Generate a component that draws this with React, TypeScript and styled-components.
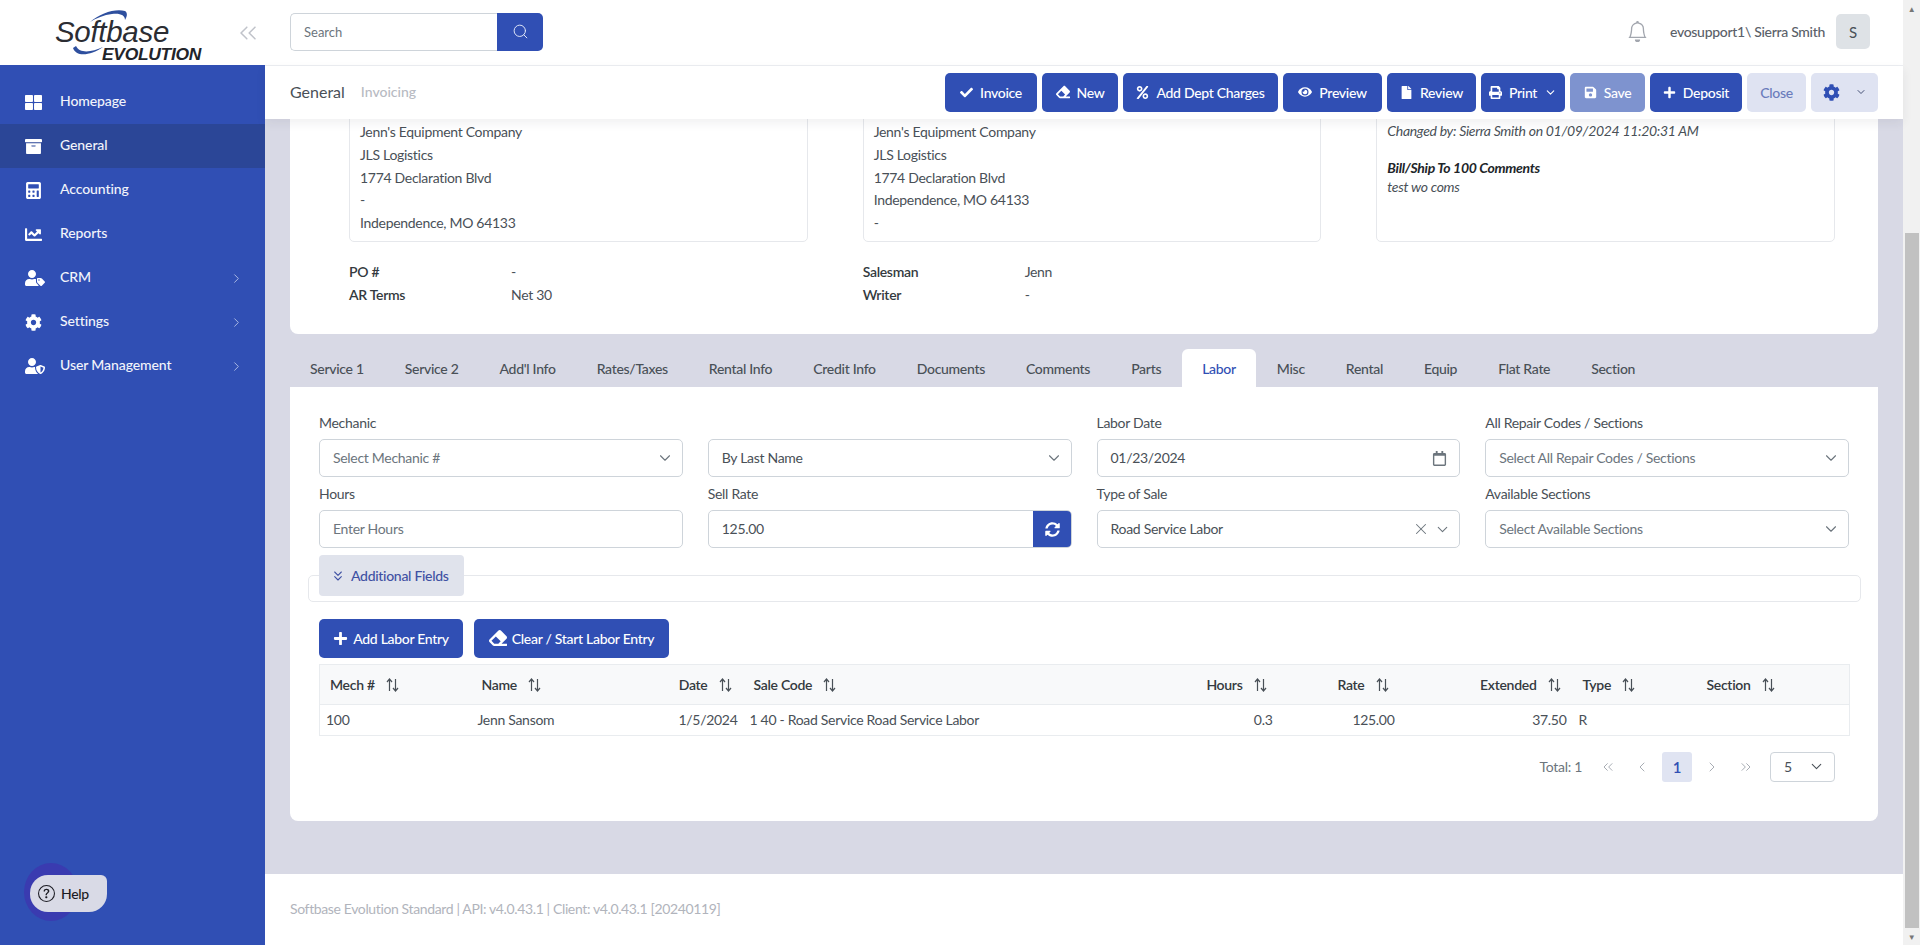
import React from "react";
import styled, { createGlobalStyle } from "styled-components";
import { ChevronDown, ChevronRight, ChevronLeft, ChevronsLeft, ChevronsRight, ChevronsDown, X, Search as SearchGlyph } from "lucide-react";
import { FaThLarge, FaArchive, FaCalculator, FaChartLine, FaUserTag, FaCog, FaUserShield, FaCheck, FaEraser, FaPercent, FaEye, FaFile, FaPrint, FaSave, FaPlus, FaSyncAlt, FaRegCalendar } from "react-icons/fa";
import { BsBell, BsQuestionCircle } from "react-icons/bs";

const PRIMARY = "#304fb4";
const FONT = `Lato, "Open Sans", "Liberation Sans", sans-serif`;

const Global = createGlobalStyle`
  html, body { margin: 0; padding: 0; height: 100%; overflow: hidden; }
  body { font-family: ${FONT}; font-size: 14px; color: #495057; letter-spacing: -0.3px; }
  * { box-sizing: border-box; }
`;

const Root = styled.div`display: flex; width: 1920px; height: 945px; overflow: hidden; background: #fff;`;

const Sidebar = styled.aside`position: relative; width: 265px; flex: none; display: flex; flex-direction: column; background: ${PRIMARY};`;
const LogoBar = styled.div`height: 65px; flex: none; background: #fff; display: flex; align-items: center; justify-content: space-between; padding: 0 3px 0 50px; color: #c0c3ca;`;
const Nav = styled.nav`padding-top: 15px; display: flex; flex-direction: column;`;
const NavItem = styled.div<{ $active?: boolean }>`
  height: 44px; display: flex; align-items: center; padding: 0 21px 0 25px; color: #f2f4fb; font-size: 14px; font-weight: 500; letter-spacing: -0.1px;
  background: ${(p) => (p.$active ? "#2b4697" : "transparent")};
`;
const NavIcon = styled.span`width: 35px; flex: none; display: flex; align-items: center; font-size: 17px; color: #fff;`;
const NavLabel = styled.span`flex: 1; padding-bottom: 3px;`;
const NavArrow = styled.span`display: flex; color: #a9b8e4;`;

const HelpWrap = styled.div`position: absolute; left: 24px; top: 863px; width: 84px; height: 58px;`;
const HelpHalo = styled.div`position: absolute; left: 0; top: 0; width: 54px; height: 58px; border-radius: 50%; background: #3a3bb0;`;
const HelpPill = styled.div`
  position: absolute; left: 6px; top: 12px; width: 77px; height: 37px; border-radius: 18px 6px 18px 18px; background: #d9dae6;
  display: flex; align-items: center; gap: 6px; padding-left: 8px; color: #1c1c24; font-size: 14px; font-weight: 500;
`;

const Main = styled.div`flex: 1; min-width: 0; display: flex; flex-direction: column;`;
const TopBar = styled.header`height: 66px; flex: none; display: flex; align-items: center; padding: 0 33px 2px 25px; border-bottom: 1px solid #eceef2; background: #fff;`;
const SearchBox = styled.div`display: flex; width: 253px; height: 38px;`;
const SearchInput = styled.div`flex: 1; border: 1px solid #ced4da; border-right: 0; border-radius: 5px 0 0 5px; padding: 0 13px; display: flex; align-items: center; color: #6c757d; font-size: 13px; letter-spacing: 0;`;
const SearchButton = styled.div`width: 46px; background: ${PRIMARY}; color: #dfe5f7; border-radius: 0 5px 5px 0; display: flex; align-items: center; justify-content: center;`;
const TopRight = styled.div`margin-left: auto; display: flex; align-items: center;`;
const Bell = styled.span`display: flex; color: #a2a6ae; font-size: 21px; margin-right: 22px;`;
const UserName = styled.span`font-size: 14px; font-weight: 500; color: #5b6169; margin-right: 11px;`;
const Avatar = styled.div`width: 34px; height: 35px; border-radius: 5px; background: #dee2e6; display: flex; align-items: center; justify-content: center; color: #495057; font-size: 15px;`;

const TitleBar = styled.div`
  position: relative; z-index: 2; height: 53px; flex: none; display: flex; align-items: center; padding: 0 25px; background: #fff;
  box-shadow: 0 4px 10px rgba(40, 40, 60, 0.07);
`;
const Crumb = styled.span`font-size: 16px; letter-spacing: 0; color: #495057; margin-right: 16px; padding-bottom: 2px;`;
const CrumbSub = styled.span`font-size: 14px; font-weight: 500; letter-spacing: 0; color: #b7bac2; padding-bottom: 2px;`;
const Toolbar = styled.div`margin-left: auto; display: flex; gap: 5px;`;
const ToolButton = styled.div<{ $w: number; $variant?: "muted" | "soft" }>`
  width: ${(p) => p.$w}px; height: 39px; padding-bottom: 1px; border-radius: 5px; display: flex; align-items: center; justify-content: center; gap: 7px; font-size: 14px; font-weight: 500;
  background: ${(p) => (p.$variant === "muted" ? "#7e93cf" : p.$variant === "soft" ? "#dfe3f2" : PRIMARY)};
  color: ${(p) => (p.$variant === "soft" ? "#6a7cbc" : "#fff")};
`;

const Content = styled.div`flex: 1; min-height: 0; overflow: hidden; background: #d8d9e5;`;
const Card = styled.section`margin: -20px 25px 0; padding: 0 43px 28px 59px; background: #fff; border-radius: 0 0 8px 8px;`;
const BoxRow = styled.div`display: grid; grid-template-columns: repeat(3, 1fr); gap: 55px;`;
const AddressBox = styled.div`height: 143px; overflow: hidden; padding: 21px 10px 0; border: 1px solid #e6e8ec; border-radius: 5px; font-size: 14px; line-height: 22.75px; color: #495057; white-space: nowrap;`;
const CommentLine = styled.div<{ $bold?: boolean; $gap?: number }>`
  font-style: italic; line-height: 19px; margin-top: ${(p) => p.$gap ?? 0}px; font-weight: ${(p) => (p.$bold ? 700 : 400)}; color: ${(p) => (p.$bold ? "#212529" : "#495057")};
`;
const InfoRow = styled.div`display: grid; grid-template-columns: repeat(3, 1fr); gap: 55px; margin-top: 18px;`;
const InfoPair = styled.div`display: grid; grid-template-columns: 162px 1fr; line-height: 23px;`;
const InfoLabel = styled.span`font-weight: 600; color: #343a40;`;
const InfoValue = styled.span`color: #495057;`;

const TabRow = styled.div`display: flex; gap: 1px; height: 38px; margin: 15px 25px 0; `;
const Tab = styled.div<{ $active?: boolean }>`
  padding: 0 20px; display: flex; align-items: center; font-size: 14px; font-weight: 500; border-radius: 6px 6px 0 0;
  color: ${(p) => (p.$active ? PRIMARY : "#495057")}; background: ${(p) => (p.$active ? "#fff" : "transparent")};
`;
const Panel = styled.section`margin: 0 25px; padding: 26px 29px 39px; background: #fff; border-radius: 0 0 8px 8px;`;
const FormGrid = styled.div`display: grid; grid-template-columns: repeat(4, 1fr); column-gap: 25px; row-gap: 7px;`;
const Field = styled.div`display: flex; flex-direction: column; gap: 6px;`;
const Label = styled.label`font-size: 14px; line-height: 20px; color: #495057;`;
const InputShell = styled.div`height: 38px; display: flex; align-items: stretch; border: 1px solid #ced4da; border-radius: 5px; background: #fff; overflow: hidden;`;
const InputText = styled.span<{ $placeholder?: boolean }>`flex: 1; display: flex; align-items: center; padding: 0 0 2px 13px; font-size: 14px; color: ${(p) => (p.$placeholder ? "#6c757d" : "#495057")};`;
const InputIcon = styled.span<{ $w?: number }>`width: ${(p) => p.$w ?? 33}px; flex: none; display: flex; align-items: center; justify-content: flex-start; color: #6c757d;`;
const RefreshButton = styled.span`width: 39px; margin: -1px; flex: none; display: flex; align-items: center; justify-content: center; background: ${PRIMARY}; color: #fff; font-size: 15px;`;

const Collapse = styled.div`position: relative; height: 27px; margin: 27px -12px 0 -11px; border: 1px solid #e6e8ec; border-radius: 5px;`;
const CollapseButton = styled.div`
  position: absolute; left: 10px; top: -21px; width: 145px; height: 41px; background: #e0e3ec; border-radius: 4px;
  display: flex; align-items: center; gap: 5px; padding-left: 11px; color: #3f51a3; font-size: 14px; font-weight: 500;
`;
const Actions = styled.div`display: flex; gap: 11px; margin-top: 17px;`;
const ActionButton = styled.div<{ $w: number }>`
  width: ${(p) => p.$w}px; height: 39px; padding-bottom: 1px; background: ${PRIMARY}; color: #fff; border-radius: 5px; display: flex; align-items: center; justify-content: center; gap: 5px; font-size: 14px; font-weight: 500;
`;

const Table = styled.table`width: calc(100% - 1px); table-layout: fixed; border-collapse: collapse; margin: 6px 0 0 0; border: 1px solid #e9ecef;`;
const Th = styled.th<{ $right?: boolean }>`
  height: 40px; padding: 0 12px 1px 10px; background: #f8f9fa; border-bottom: 1px solid #e9ecef; font-size: 14px; font-weight: 600; color: #343a40; text-align: ${(p) => (p.$right ? "right" : "left")}; white-space: nowrap;
`;
const Td = styled.td<{ $right?: boolean }>`
  height: 31px; padding: 0 6px 2px; font-size: 14px; color: #495057; text-align: ${(p) => (p.$right ? "right" : "left")}; white-space: nowrap;
`;
const SortMark = styled.svg`display: inline-block; vertical-align: -2px; margin-left: 11px; color: #495057;`;

const Pager = styled.div`display: flex; align-items: center; justify-content: flex-end; height: 30px; margin: 16px 14px 0 0; color: #8a9098;`;
const Total = styled.span`font-size: 14px; color: #6c757d; margin-right: 9px; padding-bottom: 2px;`;
const PageIcon = styled.span`width: 34px; display: flex; justify-content: center; color: #9aa0a8;`;
const PageCurrent = styled.span`width: 30px; height: 30px; margin: 0 3px; padding-bottom: 1px; background: #e0e4f2; border-radius: 3px; display: flex; align-items: center; justify-content: center; color: ${PRIMARY}; font-size: 15px; font-weight: 600;`;
const PageSize = styled.div`width: 65px; height: 30px; margin-left: 7px; border: 1px solid #ced4da; border-radius: 4px; display: flex; align-items: center; justify-content: space-between; padding: 0 9px 1px 13px; color: #495057;`;

const Footer = styled.footer`height: 71px; flex: none; display: flex; align-items: center; padding: 0 25px 3px; background: #fff; color: #b1b4bc; font-size: 14px; letter-spacing: -0.37px;`;

const Scrollbar = styled.div`width: 17px; flex: none; display: flex; flex-direction: column; align-items: center; background: #f1f1f1; color: #666;`;
const ScrollArrow = styled.div`
  height: 17px; flex: none; width: 100%; display: flex; align-items: center; justify-content: center; font-size: 8px; color: #777;
`;
const ScrollGap = styled.div`height: 216px; flex: none;`;
const ScrollThumb = styled.div`flex: 1; width: 14px; background: #c1c1c1;`;
const BottomGap = styled.div`height: 60px;`;
const CogCaret = styled.span`display: flex; margin-left: 8px; color: #333f66;`;

const LogoSvg = styled.svg`display: block; flex: none; overflow: visible;`;

function Logo() {
  return (
    <LogoSvg width="155" height="55" viewBox="50 5 155 55">
      <path d="M90 22 C100 13 116 8 125 11 C128 13 127 17 125 20 C125 15 120 13 112 14 C104 15 96 18 90 22 Z" fill="#2e4f9e" />
      <path d="M73 48 C76 57 90 56 103 47 C92 52 80 54 76 46 Z" fill="#2e4f9e" />
      <text x="55" y="42" fontFamily="'Liberation Sans', sans-serif" fontStyle="italic" fontSize="29" fill="#2b2d33" textLength="114" lengthAdjust="spacingAndGlyphs">Softbase</text>
      <text x="102" y="60" fontFamily="'Liberation Sans', sans-serif" fontStyle="italic" fontWeight="700" fontSize="17" fill="#22242a" textLength="99" lengthAdjust="spacingAndGlyphs">EVOLUTION</text>
    </LogoSvg>
  );
}

function Sort() {
  return (
    <SortMark width="13" height="14" viewBox="0 0 13 14" fill="none" stroke="currentColor" strokeWidth="1.2">
      <path d="M3.5 13V1.5M1 4l2.5-3L6 4" />
      <path d="M9.5 1v11.5M7 10l2.5 3 2.5-3" />
    </SortMark>
  );
}

const nav = [
  { icon: <FaThLarge />, label: "Homepage" },
  { icon: <FaArchive />, label: "General", active: true },
  { icon: <FaCalculator />, label: "Accounting" },
  { icon: <FaChartLine />, label: "Reports" },
  { icon: <FaUserTag size={20} />, label: "CRM", more: true },
  { icon: <FaCog />, label: "Settings", more: true },
  { icon: <FaUserShield size={20} />, label: "User Management", more: true },
];
const tabs = ["Service 1", "Service 2", "Add'l Info", "Rates/Taxes", "Rental Info", "Credit Info", "Documents", "Comments", "Parts", "Labor", "Misc", "Rental", "Equip", "Flat Rate", "Section"];
const columns: { label: string; w: number; right?: boolean }[] = [
  { label: "Mech #", w: 152 },
  { label: "Name", w: 195 },
  { label: "Date", w: 77, right: true },
  { label: "Sale Code", w: 447 },
  { label: "Hours", w: 88, right: true },
  { label: "Rate", w: 122, right: true },
  { label: "Extended", w: 172, right: true },
  { label: "Type", w: 124 },
  { label: "Section", w: 153 },
];
const row = ["100", "Jenn Sansom", "1/5/2024", "1 40 - Road Service Road Service Labor", "0.3", "125.00", "37.50", "R", ""];

const Chevron = () => <ChevronDown size={18} strokeWidth={1.5} />;

export default function App() {
  return (
    <Root>
      <Global />
      <Sidebar>
        <LogoBar>
          <Logo />
          <ChevronsLeft size={28} strokeWidth={1.3} />
        </LogoBar>
        <Nav>
          {nav.map((n) => (
            <NavItem key={n.label} $active={n.active}>
              <NavIcon>{n.icon}</NavIcon>
              <NavLabel>{n.label}</NavLabel>
              {n.more && <NavArrow><ChevronRight size={15} strokeWidth={1.6} /></NavArrow>}
            </NavItem>
          ))}
        </Nav>
        <HelpWrap>
          <HelpHalo />
          <HelpPill><BsQuestionCircle size={17} />Help</HelpPill>
        </HelpWrap>
      </Sidebar>

      <Main>
        <TopBar>
          <SearchBox>
            <SearchInput>Search</SearchInput>
            <SearchButton><SearchGlyph size={17} strokeWidth={1.4} /></SearchButton>
          </SearchBox>
          <TopRight>
            <Bell><BsBell /></Bell>
            <UserName>evosupport1\ Sierra Smith</UserName>
            <Avatar>S</Avatar>
          </TopRight>
        </TopBar>
        <TitleBar>
          <Crumb>General</Crumb>
          <CrumbSub>Invoicing</CrumbSub>
          <Toolbar>
            <ToolButton $w={92}><FaCheck size={13} />Invoice</ToolButton>
            <ToolButton $w={76}><FaEraser size={14} />New</ToolButton>
            <ToolButton $w={155}><FaPercent size={13} />Add Dept Charges</ToolButton>
            <ToolButton $w={99}><FaEye size={14} />Preview</ToolButton>
            <ToolButton $w={89}><FaFile size={13} />Review</ToolButton>
            <ToolButton $w={84}><FaPrint size={13} />Print<ChevronDown size={13} strokeWidth={2} /></ToolButton>
            <ToolButton $w={75} $variant="muted"><FaSave size={13} />Save</ToolButton>
            <ToolButton $w={92}><FaPlus size={13} />Deposit</ToolButton>
            <ToolButton $w={59} $variant="soft">Close</ToolButton>
            <ToolButton $w={67} $variant="soft"><FaCog size={17} color={PRIMARY} /><CogCaret><ChevronDown size={12} strokeWidth={1.8} /></CogCaret></ToolButton>
          </Toolbar>
        </TitleBar>
        <Content>
          <Card>
            <BoxRow>
              <AddressBox>
                <div>Jenn's Equipment Company</div>
                <div>JLS Logistics</div>
                <div>1774 Declaration Blvd</div>
                <div>-</div>
                <div>Independence, MO 64133</div>
                <div>United States</div>
              </AddressBox>
              <AddressBox>
                <div>Jenn's Equipment Company</div>
                <div>JLS Logistics</div>
                <div>1774 Declaration Blvd</div>
                <div>Independence, MO 64133</div>
                <div>-</div>
              </AddressBox>
              <AddressBox>
                <CommentLine>Changed by: Sierra Smith on 01/09/2024 11:20:31 AM</CommentLine>
                <CommentLine $bold $gap={18}>Bill/Ship To 100 Comments</CommentLine>
                <CommentLine>test wo coms</CommentLine>
              </AddressBox>
            </BoxRow>
            <InfoRow>
              <div>
                <InfoPair><InfoLabel>PO #</InfoLabel><InfoValue>-</InfoValue></InfoPair>
                <InfoPair><InfoLabel>AR Terms</InfoLabel><InfoValue>Net 30</InfoValue></InfoPair>
              </div>
              <div>
                <InfoPair><InfoLabel>Salesman</InfoLabel><InfoValue>Jenn</InfoValue></InfoPair>
                <InfoPair><InfoLabel>Writer</InfoLabel><InfoValue>-</InfoValue></InfoPair>
              </div>
            </InfoRow>
          </Card>
          <TabRow>
            {tabs.map((t) => <Tab key={t} $active={t === "Labor"}>{t}</Tab>)}
          </TabRow>
          <Panel>
            <FormGrid>
              <Field>
                <Label>Mechanic</Label>
                <InputShell><InputText $placeholder>Select Mechanic #</InputText><InputIcon $w={26}><Chevron /></InputIcon></InputShell>
              </Field>
              <Field>
                <Label>&nbsp;</Label>
                <InputShell><InputText>By Last Name</InputText><InputIcon $w={26}><Chevron /></InputIcon></InputShell>
              </Field>
              <Field>
                <Label>Labor Date</Label>
                <InputShell><InputText>01/23/2024</InputText><InputIcon $w={27}><FaRegCalendar size={15} /></InputIcon></InputShell>
              </Field>
              <Field>
                <Label>All Repair Codes / Sections</Label>
                <InputShell><InputText $placeholder>Select All Repair Codes / Sections</InputText><InputIcon $w={26}><Chevron /></InputIcon></InputShell>
              </Field>
              <Field>
                <Label>Hours</Label>
                <InputShell><InputText $placeholder>Enter Hours</InputText></InputShell>
              </Field>
              <Field>
                <Label>Sell Rate</Label>
                <InputShell><InputText>125.00</InputText><RefreshButton><FaSyncAlt /></RefreshButton></InputShell>
              </Field>
              <Field>
                <Label>Type of Sale</Label>
                <InputShell><InputText>Road Service Labor</InputText><InputIcon $w={22}><X size={18} strokeWidth={1.4} /></InputIcon><InputIcon $w={25}><ChevronDown size={17} strokeWidth={1.5} /></InputIcon></InputShell>
              </Field>
              <Field>
                <Label>Available Sections</Label>
                <InputShell><InputText $placeholder>Select Available Sections</InputText><InputIcon $w={26}><Chevron /></InputIcon></InputShell>
              </Field>
            </FormGrid>
            <Collapse>
              <CollapseButton><ChevronsDown size={16} strokeWidth={1.6} />Additional Fields</CollapseButton>
            </Collapse>
            <Actions>
              <ActionButton $w={144}><FaPlus size={15} />Add Labor Entry</ActionButton>
              <ActionButton $w={195}><FaEraser size={18} />Clear / Start Labor Entry</ActionButton>
            </Actions>
            <Table>
              <colgroup>
                {columns.map((c) => <col key={c.label} width={c.w} />)}
              </colgroup>
              <thead>
                <tr>
                  {columns.map((c) => <Th key={c.label} $right={c.right}>{c.label}<Sort /></Th>)}
                </tr>
              </thead>
              <tbody>
                <tr>
                  {row.map((v, i) => <Td key={columns[i].label} $right={columns[i].right}>{v}</Td>)}
                </tr>
              </tbody>
            </Table>
            <Pager>
              <Total>Total: 1</Total>
              <PageIcon><ChevronsLeft size={16} strokeWidth={1.3} /></PageIcon>
              <PageIcon><ChevronLeft size={16} strokeWidth={1.3} /></PageIcon>
              <PageCurrent>1</PageCurrent>
              <PageIcon><ChevronRight size={16} strokeWidth={1.3} /></PageIcon>
              <PageIcon><ChevronsRight size={16} strokeWidth={1.3} /></PageIcon>
              <PageSize>5<ChevronDown size={17} strokeWidth={1.5} /></PageSize>
            </Pager>
          </Panel>
          <BottomGap />
        </Content>
        <Footer>Softbase Evolution Standard | API: v4.0.43.1 | Client: v4.0.43.1 [20240119]</Footer>
      </Main>

      <Scrollbar>
        <ScrollArrow>▲</ScrollArrow>
        <ScrollGap />
        <ScrollThumb />
        <ScrollArrow>▼</ScrollArrow>
      </Scrollbar>
    </Root>
  );
}
